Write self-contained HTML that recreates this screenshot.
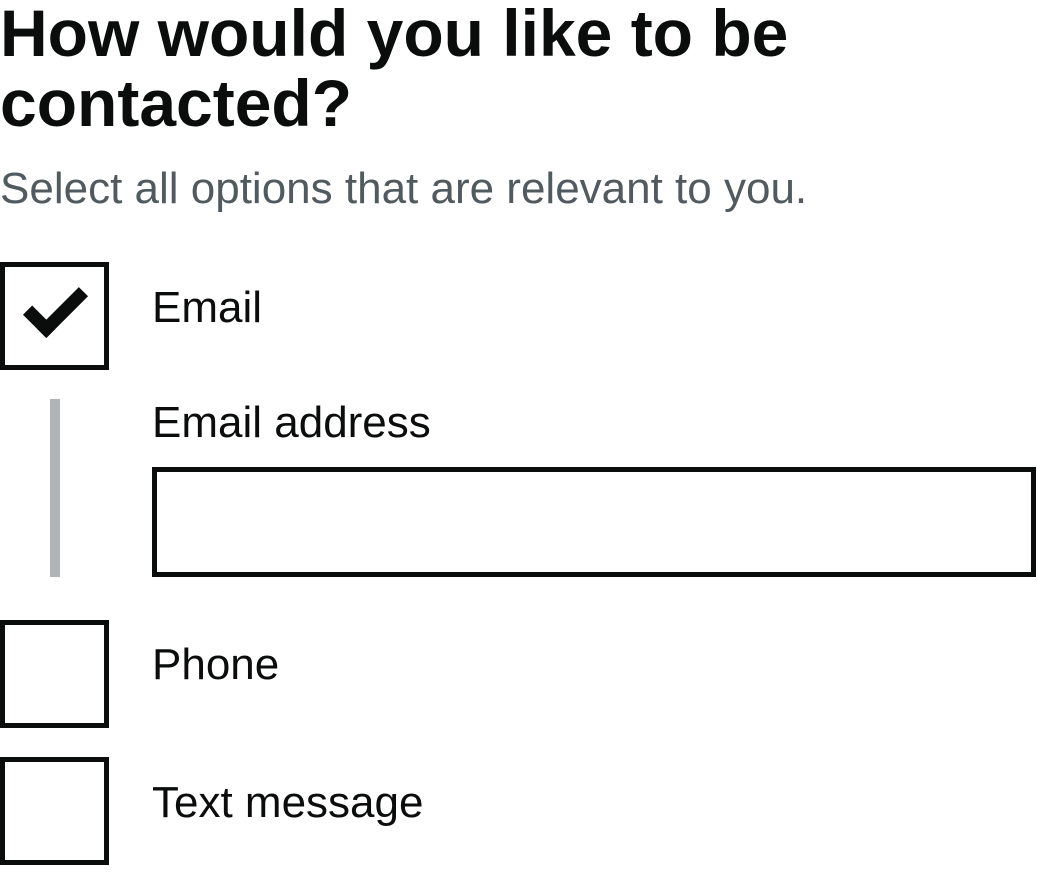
<!DOCTYPE html>
<html><head><style>
body{margin:0;background:#fff;font-family:"Liberation Sans",sans-serif;color:#0b0c0c;width:1037px;height:894px;position:relative;overflow:hidden}
.a{position:absolute;white-space:nowrap}
h1{position:absolute;left:0;top:-2px;margin:0;font-size:66px;line-height:70px;font-weight:bold}
.box{position:absolute;left:0;width:99px;height:98px;border:5px solid #0b0c0c}
.lab{font-size:44px}
.chk{position:absolute;left:26px;top:289px;width:46px;height:20px;border-left:13px solid #0b0c0c;border-bottom:13px solid #0b0c0c;transform:rotate(-45deg);transform-origin:center}
</style></head><body>
<h1>How would you like to be<br>contacted?</h1>
<div class="a" style="left:0;top:164px;font-size:44px;color:#505a5f">Select all options that are relevant to you.</div>
<div class="box" style="top:262px"></div>
<div class="chk"></div>
<div class="a lab" style="left:152px;top:283px">Email</div>
<div class="a" style="left:50px;top:399px;width:10px;height:178px;background:#b1b4b6"></div>
<div class="a lab" style="left:152px;top:398px">Email address</div>
<div class="a" style="left:152px;top:467px;width:874px;height:100px;border:5px solid #0b0c0c"></div>
<div class="box" style="top:620px"></div>
<div class="a lab" style="left:152px;top:640px">Phone</div>
<div class="box" style="top:757px"></div>
<div class="a lab" style="left:152px;top:778px">Text message</div>
</body></html>
